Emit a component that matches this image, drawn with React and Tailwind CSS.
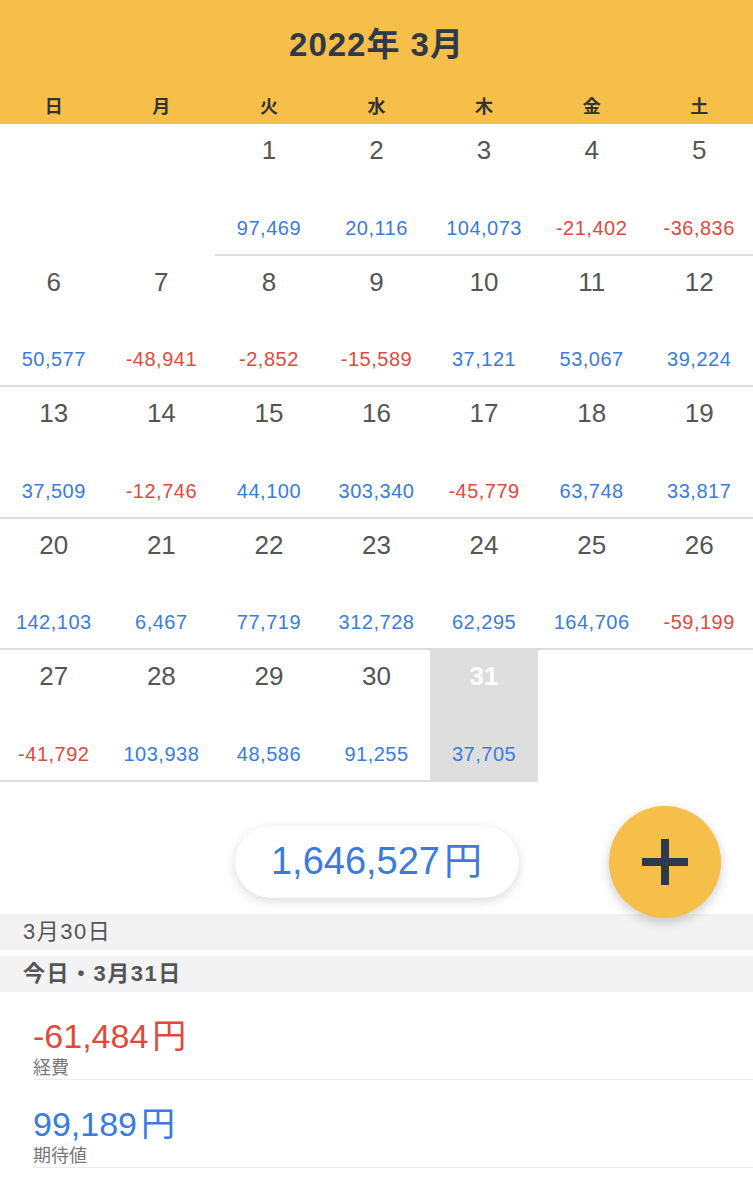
import React from "react";

const FONT = { fontFamily: '"Liberation Sans", "Noto Sans CJK JP", sans-serif' };

const weekdays = ["日", "月", "火", "水", "木", "金", "土"];

const days = [
  [1, 97469], [2, 20116], [3, 104073], [4, -21402], [5, -36836],
  [6, 50577], [7, -48941], [8, -2852], [9, -15589], [10, 37121], [11, 53067], [12, 39224],
  [13, 37509], [14, -12746], [15, 44100], [16, 303340], [17, -45779], [18, 63748], [19, 33817],
  [20, 142103], [21, 6467], [22, 77719], [23, 312728], [24, 62295], [25, 164706], [26, -59199],
  [27, -41792], [28, 103938], [29, 48586], [30, 91255], [31, 37705],
];

const fmt = (n) => n.toLocaleString("en-US");

function DayCell({ day, value }) {
  const today = day === 31;
  return (
    <div
      className={`h-[131.6px] flex flex-col items-center border-b-2 border-[#dcdcdc] pt-[10px] pb-[14px] ${
        today ? "bg-[#dedede]" : "bg-white"
      }`}
    >
      <div
        className={`text-[26px] leading-8 ${today ? "text-white font-bold" : "text-[#555]"}`}
      >
        {day}
      </div>
      <div
        className={`mt-auto text-[20px] leading-6 tracking-[0.5px] ${
          value < 0 ? "text-[#e04a3c]" : "text-[#3a7be0]"
        }`}
      >
        {fmt(value)}
      </div>
    </div>
  );
}

function Amount({ value, label, negative }) {
  return (
    <div className="ml-[33px] border-b border-[#ececec] pt-[24px] pb-[1px]">
      <div className={`text-[34px] leading-[40px] ${negative ? "text-[#e04a3c]" : "text-[#3a7be0]"}`}>
        {value}
        <span className="ml-1">円</span>
      </div>
      <div className="pt-[2px] text-[18px] leading-5 text-[#777]">{label}</div>
    </div>
  );
}

export default function App() {
  return (
    <div className="w-[753px] h-[1200px] bg-white overflow-hidden" style={FONT}>
      {/* Header */}
      <div className="h-[124px] bg-[#f5bf4a] pt-[25px]">
        <div className="text-center text-[33px] leading-10 font-bold tracking-[1px] text-[#2e3a48]">
          2022年 3月
        </div>
        <div className="grid grid-cols-7 mt-[30px]">
          {weekdays.map((w) => (
            <div key={w} className="text-center text-[18px] leading-6 font-bold text-[#333]">
              {w}
            </div>
          ))}
        </div>
      </div>

      {/* Calendar grid */}
      <div className="grid grid-cols-7">
        <div />
        <div />
        {days.map(([d, v]) => (
          <DayCell key={d} day={d} value={v} />
        ))}
      </div>

      {/* Total + FAB */}
      <div className="relative h-[132px] flex justify-center pt-[44px]">
        <div className="h-[72px] w-[284px] rounded-full bg-white shadow-[0_3px_12px_rgba(0,0,0,0.15)] flex items-center justify-center text-[38px] text-[#3a7be0]">
          1,646,527<span className="ml-1">円</span>
        </div>
        <button className="absolute z-10 right-[32px] top-[24px] w-[112px] h-[112px] rounded-full bg-[#f5bf4a] shadow-[0_4px_12px_rgba(0,0,0,0.2)] flex items-center justify-center">
          <svg width="46" height="46" viewBox="0 0 46 46">
            <rect x="19" y="0" width="8" height="46" fill="#2e3a48" />
            <rect x="0" y="19" width="46" height="8" fill="#2e3a48" />
          </svg>
        </button>
      </div>

      {/* Day sections */}
      <div className="h-[36px] bg-[#f3f3f3] pl-[23px] flex items-center text-[22px] tracking-[1.5px] text-[#555]">
        3月30日
      </div>
      <div className="h-[6px]" />
      <div className="h-[36px] bg-[#f3f3f3] pl-[23px] flex items-center text-[22px] tracking-[1.5px] font-bold text-[#555]">
        今日・3月31日
      </div>

      <Amount value="-61,484" label="経費" negative />
      <Amount value="99,189" label="期待値" />
    </div>
  );
}
